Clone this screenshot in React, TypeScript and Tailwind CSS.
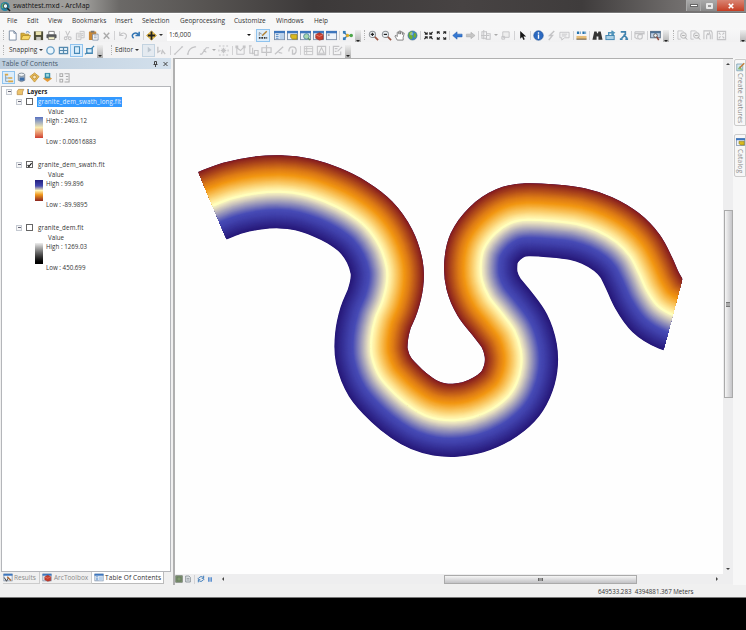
import React from "react";

type Pt = [number, number];

/* ---------- icons (12 x 12 grid) ---------- */
const G = "#c4c4c6";
const windowBase = (
  <>
    <rect x="0.5" y="1.5" width="11" height="9" fill="#eef3fa" stroke="#7d8fa8" />
    <rect x="0" y="1" width="12" height="2.6" fill="#3d76bd" />
  </>
);

const icons: Record<string, React.ReactNode> = {
  new: <path d="M2.5 1h5l2.5 2.5V11h-7.500z M7.500 1v2.500h2.500" fill="#fff" stroke="#7688a0" />,
  open: (
    <>
      <path d="M1 10.500V3.500h3.500l1 1h4V6" fill="#d9ae35" stroke="#a98424" strokeWidth=".8" />
      <path d="M1 10.500 3 6h8.500L9.500 10.500z" fill="#f7d765" stroke="#a98424" strokeWidth=".8" />
      <path d="M6.500 2.500q2-2 4 .5" fill="none" stroke="#507db0" />
    </>
  ),
  save: (
    <>
      <rect x="1" y="1.500" width="10" height="9.500" fill="#4b4a35" />
      <rect x="3" y="1.500" width="6" height="4" fill="#e9e2ae" />
      <rect x="3.500" y="7.500" width="5" height="3.500" fill="#c9c8c0" />
    </>
  ),
  print: (
    <>
      <path d="M3 5V1.500h6V5" fill="#fff" stroke="#777" />
      <rect x=".5" y="4.500" width="11" height="4.500" rx="1" fill="#55575a" />
      <rect x="2.500" y="7.500" width="7" height="3" fill="#f3f0c8" stroke="#666" strokeWidth=".7" />
    </>
  ),
  cut: <path d="M4 1 7 8M8.500 1 5 8M2.500 9a1.500 1.500 0 1 0 3 0 1.500 1.500 0 1 0-3 0M7 9a1.500 1.500 0 1 0 3 0 1.500 1.500 0 1 0-3 0" fill="none" stroke={G} strokeWidth="1.100" />,
  copy: <path d="M1.500 3.500h5v7h-5zM5 1.500h5v7H6.500M3 5.500h2.500M3 7.500h2.500M7 4h2M7 6h2" fill="#eee" stroke={G} />,
  paste: (
    <>
      <rect x="1" y="1.500" width="8" height="9.500" rx=".6" fill="#c98836" />
      <rect x="3" y=".8" width="4" height="2" fill="#777" />
      <path d="M5 4.500h6V11H5z M6.500 6.500h3M6.500 8.500h3" fill="#fff" stroke="#72829c" strokeWidth=".8" />
    </>
  ),
  del: <path d="m3 3 6 6.500M9 3 3 9.500" stroke="#aaa" strokeWidth="1.500" />,
  undo: <path d="M3 2v4h4M3.500 5.500Q6 2 9 4t-.5 6" fill="none" stroke={G} strokeWidth="1.300" />,
  redo: <path d="M10 2v4H6M9.500 5.500Q7 2 4 4t0 5" fill="none" stroke="#3476b4" strokeWidth="1.700" />,
  add: (
    <>
      <path d="m6 1 5.500 5-5.500 5-5.500-5z" fill="#f2c94a" stroke="#c69524" strokeWidth=".6" />
      <path d="M6 1.500v9M2 6h8" stroke="#222" strokeWidth="2" />
    </>
  ),
  editor: (
    <>
      <path d="M1 9.500h10" stroke="#333" strokeWidth="2" strokeDasharray="2 1" />
      <path d="M1.500 7V3l3 2" fill="none" stroke="#888" />
      <path d="m5 7 5.500-5.500" stroke="#b18031" strokeWidth="1.700" />
    </>
  ),
  toc: <>{windowBase}<path d="M2 5h3M2 7h3M2 9h3" stroke="#4b85c5" strokeWidth="1" /><rect x="6" y="4.500" width="5" height="5.500" fill="#b9d1eb" /></>,
  catalog: <>{windowBase}<path d="M4 5h7v5H6L4 8z" fill="#d9b91e" stroke="#8c7c24" strokeWidth=".8" /></>,
  search: <>{windowBase}<circle cx="7" cy="7" r="3" fill="#a8d8ad" stroke="#4b85a0" /><path d="m9 9 2 2" stroke="#568a54" strokeWidth="1.500" /></>,
  toolbox: <>{windowBase}<path d="m3 5 4-2 4 2v5l-4 1-4-2z" fill="#c83c2c" stroke="#912a23" strokeWidth=".7" /><path d="m3.500 5.500 3.500 1.500L11 5" fill="none" stroke="#ee9b87" strokeWidth=".7" /></>,
  python: <>{windowBase}<path d="M2 5.500h2" stroke="#555" /></>,
  model: (
    <>
      <path d="M2.500 3 6 6 2.500 9.500M6 6h4" fill="none" stroke="#3576a8" strokeWidth="1.300" />
      <rect x="1" y="1" width="3" height="3" fill="#347bb8" /><rect x="1" y="8" width="3" height="3" fill="#347bb8" />
      <circle cx="6" cy="6" r="1.800" fill="#dcab29" /><circle cx="10" cy="6" r="2" fill="#4da64a" />
    </>
  ),
  zoomin: <><circle cx="4.800" cy="4.800" r="3.400" fill="#e8edf0" stroke="#8d9296" strokeWidth="1.100" /><path d="M3 4.800h3.600M4.800 3v3.600" stroke="#222" strokeWidth="1.200" /><path d="m7.500 7.500 3.500 3.500" stroke="#9b5745" strokeWidth="1.800" /></>,
  zoomout: <><circle cx="4.800" cy="4.800" r="3.400" fill="#e8edf0" stroke="#8d9296" strokeWidth="1.100" /><path d="M3 4.800h3.600" stroke="#222" strokeWidth="1.300" /><path d="m7.500 7.500 3.500 3.500" stroke="#9b5745" strokeWidth="1.800" /></>,
  pan: <path d="M3.500 11 1 6.500l1-.8 1.500 1.500V2.500L5 2l.5 2.500V1.300L7 1v3.500L8 1.800l1.200.3V5l1-2 1 .5L10 8v3z" fill="#fff" stroke="#717171" strokeWidth=".9" />,
  globe: <><circle cx="6" cy="6" r="5" fill="#3686c9" stroke="#496d83" strokeWidth=".6" /><path d="M2 3q3-2 4-1 0 2-2 3 3 1 2 4-1 1-2 1Q1 8 2 3M8 3l2 1v3L8 9 7 6z" fill="#70ad36" /><circle cx="5" cy="4" r="1.800" fill="#fff" opacity=".35" /></>,
  fixin: <path d="M1.500 2l2.700 2.700M10.500 2 7.800 4.700M1.500 10l2.700-2.700M10.500 10 7.800 7.300M2 4.500h2.500V2.500M10 4.500H7.500V2.500M2 7.500h2.500v2M10 7.500H7.500v2" fill="none" stroke="#252525" strokeWidth="1.300" />,
  fixout: <path d="M1.500 4V2h2.500M8 2h2.500v2M1.500 8v2h2.500M8 10h2.500V8M2 2l2 2M10 2 8 4M2 10l2-2M10 10 8 8" fill="none" stroke="#252525" strokeWidth="1.300" />,
  back: <path d="M.8 6 5.500 2v2.500h5.500v3H5.500V10z" fill="#3679d3" stroke="#255dab" strokeWidth=".6" />,
  fwd: <path d="M11 6 6.500 2.500v2H1.500v3h5v2z" fill="#c5c5c5" stroke="#aaa" strokeWidth=".6" />,
  selfeat: <path d="M1 2h5v7H1zM6 4h4v6H5M3 0v10M0 6h9" fill="none" stroke={G} strokeWidth="1.100" />,
  clear: <path d="M3 2h7v6H3zM2 7h3v3H2z" fill="#eee" stroke={G} />,
  arrow: <path d="M3.500 1v8.500l2-2 1.500 3.500 1.500-.8L7 7h3z" fill="#161616" />,
  info: <><circle cx="6" cy="6" r="5.200" fill="#2b69c1" stroke="#18498e" strokeWidth=".6" /><path d="M6 5v4.500M6 2.500V4" stroke="#fff" strokeWidth="1.500" /></>,
  bolt: <path d="M9 1 4 6h3l-4 5" fill="none" stroke={G} strokeWidth="1.600" />,
  note: <path d="M1 2.500h10v6H6L3 11V8.500H1zM3 4.500h6M3 6.500h5" fill="none" stroke={G} />,
  ruler: <><path d="M1 3h4M7 3h4" stroke="#2674ae" strokeWidth="2.600" strokeDasharray="2.500 .8" /><rect x=".5" y="6.500" width="11" height="3.500" fill="#e7bd76" /><path d="M.5 10h11" stroke="#5a4b34" /></>,
  binocs: <path d="M2.500 1.500h2.500l.5 2h1l.5-2h2.500l2 9H7V7H5v3.500H.5z" fill="#353535" />,
  route: <><path d="M4 7V3h5v4M7 1l3 2-3 2" fill="none" stroke="#5194ba" strokeWidth="1.500" /><rect x="1" y="6" width="9" height="4.500" fill="#abd0e5" stroke="#3c83b0" /></>,
  xy: <path d="M3 2h5v3L4 9M6 5l4 4M2 10h3M8 10h3" fill="none" stroke="#3f82ae" strokeWidth="1.800" />,
  time: <path d="M1 2h10v3M1 4h10M1 2v6l3 2M9 5v2a2.500 2.500 0 1 1-3-2h3z" fill="none" stroke={G} strokeWidth="1.200" />,
  viewer: <><rect x=".7" y="1.500" width="10.500" height="7" fill="#bed0e6" stroke="#53677d" /><path d="M.5 2.500h11" stroke="#4c7196" strokeWidth="2" /><circle cx="6" cy="6" r="2" fill="#f2f2f2" stroke="#565656" /><path d="m7.500 7.500 2 3.500" stroke="#934a3e" strokeWidth="1.700" /></>,
  pageZoomIn: <><path d="M1 1h5l2 2M1 1v9h3" fill="none" stroke={G} /><circle cx="7" cy="6" r="3" fill="#eee" stroke={G} strokeWidth="1.300" /><path d="M5.500 6h3M9 8l2 2.500" stroke="#aaa" /></>,
  pagePan: <path d="M1 10V1h8l1 2v7M4 10V6l1-2 1 1 1-2 1 3v4" fill="none" stroke={G} strokeWidth="1.200" />,
  pageFull: <path d="M1.500 1.500h9v9h-9zM3 3l2 2M9 3 7 5M3 9l2-2M9 9 7 7" fill="none" stroke={G} strokeWidth="1.200" />,
  circle: <circle cx="6" cy="6" r="4" fill="#e9f5fc" stroke="#6ba0c7" strokeWidth="1.500" />,
  grid: <path d="M1.500 2.500h9v7h-9zM6 2.500v7M1.500 6h9" fill="#e0eef7" stroke="#5589ae" strokeWidth="1.300" />,
  vertex: <path d="M3 2h6v8H3z" fill="#d9edfb" stroke="#4689b7" strokeWidth="1.300" />,
  edge: <path d="M3 4h6v5H3zM1 10l3-2M8 4l3-3" fill="#d9edfb" stroke="#4487b3" strokeWidth="1.400" />,
  edit: <path d="M4.500 2v7L9 6z" fill="#bbc5ce" />,
  editnote: <path d="M2 2v6l3-2M6 10l1-4 3 4" fill="none" stroke={G} strokeWidth="1.500" />,
  line: <path d="M2 10 10 2M1 10h2M9 2h2" stroke={G} strokeWidth="1.300" />,
  arc: <path d="M2 10Q3 3 10 2M1 10h2M9 2h2" fill="none" stroke={G} strokeWidth="1.400" />,
  trace: <path d="M1 10h2l5-7h3M5 5l3 3" fill="none" stroke={G} strokeWidth="1.300" />,
  point: <path d="M1 1h2M5 1h2M9 1h2M1 11h2M5 11h2M9 11h2M1 5v2M11 5v2M3 6h6M6 3v6M4 4l4 4M8 4 4 8" stroke={G} strokeWidth="1.100" />,
  verts: <path d="M2 1v9h8M2 3l4 3 4-4v8M1 1h2v2H1zM9 1h2v2H9z" fill="none" stroke={G} strokeWidth="1.100" />,
  reshape: <path d="M2 1v8h5M5 3v7M7 6h4v5H7zM1 1h3" fill="none" stroke={G} strokeWidth="1.200" />,
  cutpoly: <path d="M6 0v12M1 3h10v5H1z" fill="none" stroke={G} strokeWidth="1.300" />,
  split: <path d="M1 10 10 2M5 8l4 1" fill="none" stroke={G} strokeWidth="1.400" />,
  rotate: <path d="M2 7q0-5 4-5t4 4-4 4M6 5v5h3" fill="none" stroke={G} strokeWidth="1.400" />,
  attrs: <path d="M1.500 1.500h9v9h-9zM1.500 4h9M1.500 7h9M4 2v8" fill="#f4f4f4" stroke={G} />,
  sketch: <path d="M1.500 1.500h9v9h-9zM3 9l3-6 3 6z" fill="#f4f4f4" stroke={G} strokeWidth="1.200" />,
  create: <path d="M8 1.500H1.500v9h8V7M3 4h3M3 7h2M6 7l5-5" fill="none" stroke={G} strokeWidth="1.300" />,
  treeOrder: <><path d="M2 2v8h3M2 6h3" fill="none" stroke="#7891a6" /><path d="M1 1h4v2H1zM5 5h5v2H5zM5 9h6v2H5z" fill="#d9a748" /></>,
  source: <><path d="M2.500 3v6q3.500 3 7 0V3z" fill="#b7c2ce" stroke="#7c8894" /><ellipse cx="6" cy="3" rx="3.500" ry="1.800" fill="#eef1f4" stroke="#7c8894" /><path d="M4 6h5v3.500H4z" fill="#3e6ea8" /></>,
  visible: <><path d="m6 1 5 4-5 6-5-6z" fill="#e8bd55" stroke="#bd8a2c" strokeWidth=".8" /><circle cx="6" cy="5.500" r="2" fill="#f9e8b8" stroke="#a9742a" strokeWidth=".7" /></>,
  selection: <><path d="m1 7 5-3 5 3-5 4z" fill="#e49a39" /><path d="M3 1h6v6H3z" fill="#388faa" /><path d="M4.500 2h3v3h-3z" fill="#a1dbe0" /></>,
  options: <path d="M1 2h3v3H1zM1 8h3v3H1zM6 2h5v9H6M7.500 5H10M7.500 8H10" fill="none" stroke="#aaa" strokeWidth="1.100" />,
  results: <>{windowBase}<path d="m5 5 5 5" fill="none" stroke="#b36f38" strokeWidth="2" /><path d="m1 6 3 5 2-4" fill="none" stroke="#444" strokeWidth="1.300" /></>,
  createFeat: <><path d="M1 2h8v9H1z" fill="#d5e8f1" stroke="#7399ac" /><path d="m2 9 3-4 4 5" fill="#86bb76" /><path d="m5 7 6-6" stroke="#c47c38" strokeWidth="1.800" /></>,
  layers: <path d="M3 2h8L9 6v4H1V5z" fill="#ecc36c" stroke="#ae803e" strokeWidth=".9" />,
  refresh: <path d="M10 4.500Q6 0 2.500 5H1M2 7.500q4 4.500 7.500-.5H11M10 1v4H7M2 11V7h3" fill="none" stroke="#3877b7" strokeWidth="1.400" />,
  pause: <path d="M4 2v8M8 2v8" stroke="#4d86cc" strokeWidth="2.500" />,
  page: <path d="M2.500 1.500h5l2 2v7h-7zM4 5h4M4 7.500h4" fill="#e8ecef" stroke="#6b747b" />,
  dataview: <path d="M1 1h10v10H1zM3 3h6v6H3z" fill="#7f9b6d" stroke="#626a62" />,
};

function Icon({ n, size = "w-[11px] h-[11px]" }: { n: string; size?: string }) {
  return <svg viewBox="0 0 12 12" className={`${size} shrink-0`}>{icons[n]}</svg>;
}
function Icons({ names }: { names: string }) {
  return <>{names.split(" ").map((n) => <span key={n} className="w-[13px] h-[13px] shrink-0 flex items-center justify-center"><Icon n={n} /></span>)}</>;
}
const Sep = ({ w = "w-[3px]" }: { w?: string }) => <span className={`${w} shrink-0 flex justify-center`}><i className="w-px h-[9px] bg-[#d2d2d4]" /></span>;
const Handle = () => <span className="w-[6px] shrink-0 flex justify-center"><i className="h-[10px] border-l border-dotted border-[#b4b4b4]" /></span>;
const Caret = ({ c = "border-t-[#333]" }: { c?: string }) => <span className="w-[6px] shrink-0 flex justify-center"><i className={`border-x-2 border-x-transparent border-t-2 ${c}`} /></span>;
const Overflow = () => (
  <span className="w-[6px] h-[14px] shrink-0 bg-linear-to-b from-[#eee] to-[#aaa] flex items-end justify-center pb-[2px] mt-[3px]">
    <i className="border-x-2 border-x-transparent border-t-2 border-t-[#222]" />
  </span>
);
const Pressed = ({ n, w = "w-[14px]", c = "border-[#8fc3ee] bg-[#dcedfb]" }: { n: string; w?: string; c?: string }) => (
  <span className={`${w} ${c} h-[13px] shrink-0 border flex items-center justify-center`}><Icon n={n} size="w-[10px] h-[10px]" /></span>
);

/* ---------- swath raster ---------- */
const HALF = 36.6;
const center: Pt[] = [
  [190, 214.500], [212.500, 205.600], [233, 198], [256.500, 193.200], [280, 191.800], [303, 194.500], [326, 202], [347, 212.500], [366, 227],
  [379.500, 246], [386.600, 267], [386.800, 283], [382.500, 301], [375.500, 318], [371.500, 337], [371.800, 356], [380, 377],
  [396.500, 395.500], [412, 408], [425, 415.300], [439, 419.300], [455, 420.200], [473, 417.300], [492, 409], [508, 396.500],
  [516.500, 383], [521, 367], [520.700, 350], [514.500, 331], [502, 313.500], [489, 297], [482, 280.500], [480.800, 264],
  [484, 248.500], [495, 233.500], [510.500, 223], [527, 219.800], [553, 221], [577, 224], [597, 230.500], [616.500, 242],
  [630, 256], [639, 273], [647, 290.500], [657.500, 305.500], [672.500, 314.700], [694, 320.500],
];
function spline(p: Pt[]): string {
  let d = "";
  for (let i = 0; i < p.length - 1; i++) {
    const a = p[Math.max(0, i - 1)], b = p[i], c = p[i + 1], e = p[Math.min(p.length - 1, i + 2)];
    d += `C${b[0] + (c[0] - a[0]) / 6} ${b[1] + (c[1] - a[1]) / 6} ${c[0] - (e[0] - b[0]) / 6} ${c[1] - (e[1] - b[1]) / 6} ${c[0]} ${c[1]}`;
  }
  return d;
}
const body = spline(center);
const start = `M${center[0][0]} ${center[0][1]}`;
const line = start + body;
const upper = `M130 241L${center[0][0]} ${center[0][1]}${body}L780 343V60H130Z`;

const warm: [number, number[]][] = [[0, [255, 255, 190]], [0.1, [255, 236, 160]], [0.47, [242, 151, 18]], [0.62, [220, 122, 22]], [1, [132, 28, 32]]];
const cool: [number, number[]][] = [[0, [255, 255, 190]], [0.1, [228, 220, 190]], [0.5, [72, 76, 182]], [0.62, [65, 66, 172]], [1, [38, 24, 120]]];
function ramp(stops: [number, number[]][], t: number): string {
  const k = Math.max(1, stops.findIndex((s) => s[0] >= t));
  const [t0, a] = stops[k - 1], [t1, b] = stops[k];
  const f = (t - t0) / (t1 - t0);
  return `rgb(${a.map((v, i) => Math.round(v + (b[i] - v) * f)).join(",")})`;
}
const steps = Array.from({ length: 74 }, (_, i) => 1 - i / 74);
const Bands = ({ stops }: { stops: [number, number[]][] }) => (
  <>{steps.map((t) => <path key={t} d={line} fill="none" stroke={ramp(stops, t)} strokeWidth={2 * HALF * t} strokeLinejoin="round" />)}</>
);
function Swath() {
  return (
    <svg viewBox="175 60 548 514" className="w-[548px] h-[514px] block">
      <clipPath id="warmSide"><path d={upper} /></clipPath>
      <clipPath id="swathEnd"><path d="M168.200 100H729.600L682.300 279 663.500 350 623.900 500H335.700Z" /></clipPath>
      <g clipPath="url(#swathEnd)">
        <Bands stops={cool} />
        <g clipPath="url(#warmSide)"><Bands stops={warm} /></g>
        <path d={line} fill="none" stroke="rgb(255,254,188)" strokeWidth="2" />
      </g>
    </svg>
  );
}

/* ---------- table of contents ---------- */
const Expander = () => <span className="w-[6px] h-[6px] shrink-0 border border-[#c5cad2] bg-[#f6f6f6] flex items-center justify-center"><i className="w-[3px] h-px bg-[#667]" /></span>;

function Layer({ name, high, low, bar, checked, selected, track }: { name: string; high: string; low: string; bar: string; checked?: boolean; selected?: boolean; track: string }) {
  return (
    <div className="h-[63px] pl-[14px]">
      <div className="h-[11px] flex items-center">
        <Expander />
        <span className="ml-[4px] w-[7px] h-[7px] border border-[#666] bg-white flex items-center justify-center">
          {checked && <svg viewBox="0 0 6 6" className="w-[6px] h-[6px]"><path d="m.8 2.800 1.500 2L5.500.8" fill="none" stroke="#111" strokeWidth="1.300" /></svg>}
        </span>
        <span className={`ml-[4px] h-[10px] leading-[9px] px-[1px] ${track} ${selected ? "bg-[#3399ff] text-[#e4f1ff]" : ""}`}>{name}</span>
      </div>
      <div className="h-[10px] leading-[10px] pl-[32px]">Value</div>
      <div className="flex pl-[19px] h-[29px]">
        <i className={`w-[8px] h-[21px] ${bar}`} />
        <div className="ml-[3px] flex flex-col justify-between leading-[8px]"><span>High : {high}</span><span>Low : {low}</span></div>
      </div>
    </div>
  );
}

const menus: [string, string][] = [
  ["File", "w-[20px]"], ["Edit", "w-[21px]"], ["View", "w-[24px]"], ["Bookmarks", "w-[43px]"], ["Insert", "w-[27px]"], ["Selection", "w-[38px]"],
  ["Geoprocessing", "w-[54px]"], ["Customize", "w-[42px]"], ["Windows", "w-[38px]"], ["Help", "w-[20px]"],
];

export default function App() {
  return (
    <div className="w-[746px] h-[630px] flex flex-col overflow-hidden bg-black text-[#333] text-[6.500px] whitespace-nowrap font-['Open_Sans','Noto_Sans',sans-serif]">
      <div className="h-[598px] shrink-0 flex flex-col bg-[#f0f0f0] border-b border-[#777]">
        {/* title bar */}
        <header className="h-[13px] shrink-0 flex items-center bg-[linear-gradient(90deg,#9a9a98_0%,#a09f9c_11%,#6b6967_16%,#565351_28%,#3c3939_42%,#474343_62%,#3f3c3c_78%,#6d6a69_90%,#8b8989_100%)] border-b border-[#777]">
          <svg viewBox="0 0 12 12" className="w-[11px] h-[11px]">
            <circle cx="5.500" cy="6" r="5" fill="#2584a4" /><path d="M2 4q3-3 5 0L5 7 2 8z" fill="#77b86a" />
            <circle cx="6" cy="5.500" r="2.500" fill="#e6f4f6" stroke="#24404c" /><path d="m8 8 3 3" stroke="#222" strokeWidth="1.600" />
          </svg>
          <span className="ml-[2px] text-[6.800px] leading-[12px] text-[#111]">swathtest.mxd - ArcMap</span>
          <div className="ml-auto mr-[2px] h-[11px] self-start flex text-white">
            <span className="w-[15px] bg-linear-to-b from-[#aaa] to-[#888] border-x border-[#aaa] flex items-center justify-center"><i className="w-[8px] h-[3px] bg-white border border-[#666]" /></span>
            <span className="w-[16px] bg-linear-to-b from-[#aaa] to-[#888] flex items-center justify-center"><i className="w-[7px] h-[6px] border-2 border-[#e8e8e8] rounded-[1px]" /></span>
            <span className="w-[27px] bg-linear-to-b from-[#d88472] to-[#c63c20] flex items-center justify-center">
              <svg viewBox="0 0 8 8" className="w-[6px] h-[6px]"><path d="m1 1 6 6M7 1 1 7" stroke="#fff" strokeWidth="2.200" /></svg>
            </span>
          </div>
        </header>

        {/* menu */}
        <nav className="h-[15px] shrink-0 flex items-center pl-[7px] pb-px bg-[#f7f7f7] border-t border-white">
          {menus.map(([m, w]) => <span key={m} className={w}>{m}</span>)}
        </nav>

        {/* standard and tools toolbars */}
        <div className="h-[14px] shrink-0 flex items-center bg-linear-to-b from-[#f8f8f8] to-[#f1f1f2]">
          <Handle /><Icons names="new open save print" /><Sep /><Icons names="cut copy paste del" /><Sep /><Icons names="undo redo" /><Sep /><Icons names="add" /><Caret />
          <span className="ml-[3px] w-[87px] h-[11px] shrink-0 bg-white flex items-center justify-between pl-[2px] pr-[2px]">1:6,000<Caret c="border-t-[#111]" /></span>
          <span className="w-[2px] shrink-0" /><Pressed n="editor" /><span className="w-[3px] shrink-0" />
          <Icons names="toc catalog search toolbox python" /><Sep /><Icons names="model" /><span className="w-px shrink-0" /><Overflow /><Handle />
          <Icons names="zoomin zoomout pan globe" /><Sep /><Icons names="fixin fixout" /><Sep /><Icons names="back fwd" /><Sep />
          <Icons names="selfeat" /><Caret c="border-t-[#aaa]" /><Icons names="clear" /><Sep w="w-[4px]" /><Icons names="arrow" /><Sep w="w-[3px]" />
          <Icons names="info bolt note" /><Sep w="w-[4px]" /><Icons names="ruler" /><Sep /><Icons names="binocs route xy" /><Sep /><Icons names="time" /><Sep /><Icons names="viewer" />
          <span className="w-px shrink-0" /><Overflow /><span className="w-px shrink-0" /><Handle /><Icons names="pageZoomIn" /><Icons names="pageZoomIn" /><Icons names="pagePan pageFull" />
          <span className="ml-auto flex"><Overflow /></span>
        </div>

        {/* snapping and editor toolbars */}
        <div className="h-[16px] shrink-0 flex items-center bg-[#f3f3f4]">
          <Handle /><span className="ml-[3px] w-[31px] shrink-0">Snapping</span><span className="-ml-[2px]"><Caret /></span>
          <span className="w-[6px] shrink-0 -ml-[6px]" /><Icons names="circle grid" /><Pressed n="vertex" w="w-[13px]" /><Icons names="edge" /><span className="w-px" /><Overflow />
          <span className="w-[5px]" /><Handle /><span className="ml-[1px] w-[19px] shrink-0">Editor</span><Caret />
          <span className="w-[2px]" /><Pressed n="edit" w="w-[13px]" c="border-[#c3d3e0] bg-[#e4eaf0]" /><Icons names="editnote" /><Sep w="w-[4px]" />
          <Icons names="line arc trace" /><Caret c="border-t-[#aaa]" /><Icons names="point" /><Sep w="w-[4px]" /><Icons names="verts reshape cutpoly split rotate" /><Sep w="w-[3px]" />
          <Icons names="attrs sketch" /><Sep /><Icons names="create" /><span className="w-px" /><Overflow />
        </div>

        <main className="h-[527px] shrink-0 flex">
          {/* left dock */}
          <aside className="w-[171px] shrink-0 flex flex-col">
            <div className="h-[11px] shrink-0 flex items-center pl-[2px] pr-[3px] pt-px bg-linear-to-r from-[#bccddd] to-[#d3e0ec] text-[6.700px] text-[#46586b]">
              Table Of Contents
              <svg viewBox="0 0 16 8" className="ml-auto w-[16px] h-[8px]"><path d="M2.500 1.500h2v3h-2zM1.500 4.500h4M3.500 4.500V7M11.500 2l4 4M15.500 2l-4 4" fill="none" stroke="#444" strokeWidth="1" /></svg>
            </div>
            <div className="h-[17px] shrink-0 flex items-center pl-[2px] bg-[#f3f3f4]">
              <Pressed n="treeOrder" w="w-[13px]" /><Icons names="source visible selection" /><Sep w="w-[4px]" /><Icons names="options" />
            </div>
            <div className="h-[486px] shrink-0 bg-white border border-[#b4b6ba] ml-px text-[6.200px]">
              <div className="h-[9px] flex items-center pl-[4px] font-bold text-[#222]"><Expander /><span className="w-[4px]" /><Icon n="layers" size="w-[9px] h-[8px]" /><span className="ml-[2px]">Layers</span></div>
              <Layer name="granite_dem_swath_long.flt" high="2403.12" low="0.00616883" bar="bg-linear-to-b from-[#5870c0] via-[#f8eab0] to-[#cc3a30]" selected track="tracking-[0.18px]" />
              <Layer name="granite_dem_swath.flt" high="99.896" low="-89.9895" bar="bg-[linear-gradient(180deg,#242080_0%,#4448b0_28%,#fff4b8_50%,#f0981c_70%,#8c2420_100%)]" checked track="tracking-[0.16px]" />
              <Layer name="granite_dem.flt" high="1269.03" low="450.699" bar="bg-linear-to-b from-[#eee] to-black" track="tracking-[0.13px]" />
            </div>
            <div className="h-[12px] flex text-[#8a8a8a]">
              <span className="ml-[3px] w-[37px] flex items-center border-r border-b border-[#ccc]"><Icon n="results" size="w-[10px] h-[9px]" /><span className="ml-px">Results</span></span>
              <span className="ml-[2px] w-[50px] flex items-center border-r border-b border-[#ccc]"><Icon n="toolbox" size="w-[10px] h-[9px]" /><span className="ml-[2px]">ArcToolbox</span></span>
              <span className="w-[72px] flex items-center bg-white border-r border-b border-[#bbb] text-[#333] tracking-[0.1px]"><span className="w-[2px]" /><Icon n="toc" size="w-[10px] h-[9px]" /><span className="ml-px">Table Of Contents</span></span>
            </div>
          </aside>
          <span className="w-[2px] shrink-0" />

          {/* map view */}
          <section className="w-[560px] shrink-0 border-l-2 border-t border-[#b0b0b0] flex flex-col">
            <div className="h-[515px] shrink-0 flex">
              <div className="w-[548px] bg-[#fefefe] shrink-0 pt-px"><Swath /></div>
              <div className="w-[10px] flex flex-col items-center bg-[#eeeeef]">
                <i className="mt-[4px] border-x-2 border-x-transparent border-b-2 border-b-[#444]" />
                <div className="mt-[145px] w-[9px] h-[188px] border border-[#aaa] bg-linear-to-r from-[#f5f5f5] to-[#c5c5c8] flex items-center justify-center"><i className="w-[4px] h-[5px] border-y border-[#777] bg-[#aaa]" /></div>
                <i className="mt-auto mb-[4px] border-x-2 border-x-transparent border-t-2 border-t-[#444]" />
              </div>
            </div>
            <div className="h-[10px] shrink-0 flex items-center bg-[#eeeeef]">
              <Icon n="dataview" size="w-[8px] h-[8px]" /><span className="w-px" /><Icon n="page" size="w-[8px] h-[8px]" /><Sep w="w-[5px]" /><Icon n="refresh" size="w-[8px] h-[8px]" /><span className="w-px" /><Icon n="pause" size="w-[8px] h-[7px]" />
              <i className="ml-[8px] border-y-2 border-y-transparent border-r-2 border-r-[#444]" />
              <div className="ml-[220px] w-[193px] h-[9px] border border-[#aaa] bg-linear-to-b from-[#f5f5f5] to-[#c2c2c5] flex items-center justify-center"><i className="w-[5px] h-[3px] bg-[#999] border-x border-[#666]" /></div>
              <i className="ml-auto mr-[15px] border-y-2 border-y-transparent border-l-2 border-l-[#444]" />
            </div>
          </section>

          {/* right dock */}
          <aside className="w-[13px] shrink-0 bg-[#f7f7f7] pt-px text-[#8a8a8a]">
            <div className="h-[67px] ml-px border border-[#ccc] rounded-l-[2px] flex flex-col items-center pt-[2px]"><Icon n="createFeat" size="w-[9px] h-[10px]" /><span className="mt-[1px] [writing-mode:vertical-rl] leading-[10px] tracking-[0.15px]">Create Features</span></div>
            <div className="mt-[8px] h-[43px] ml-px border border-[#ccc] rounded-l-[2px] flex flex-col items-center pt-[2px]"><Icon n="catalog" size="w-[9px] h-[10px]" /><span className="mt-[2px] [writing-mode:vertical-rl] leading-[10px] tracking-[0.2px]">Catalog</span></div>
          </aside>
        </main>

        <footer className="h-[12px] flex items-center pl-[598px] pt-px text-[6.200px] whitespace-pre">649533.283  4394881.367 Meters</footer>
      </div>
    </div>
  );
}
